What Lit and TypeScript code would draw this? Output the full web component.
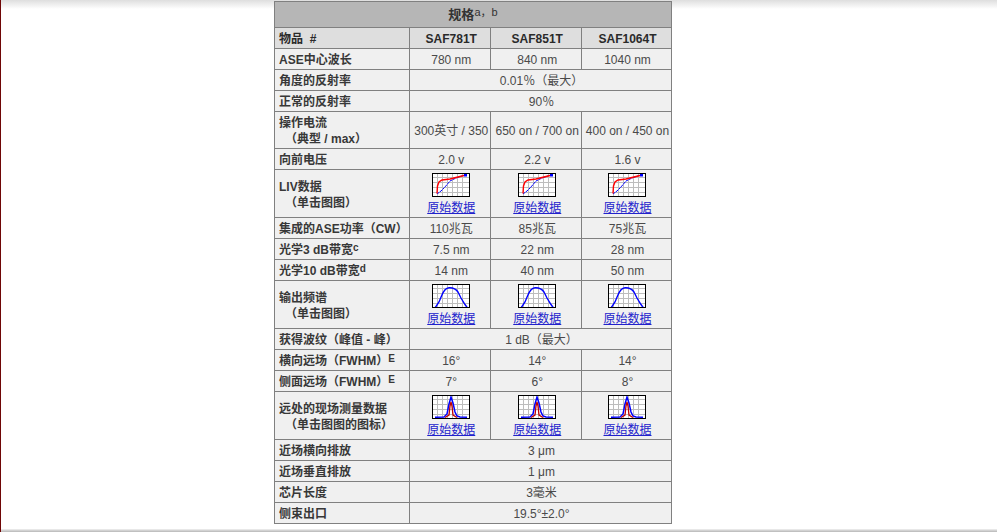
import { LitElement, html, css, svg } from "lit";
import { customElement } from "lit/decorators.js";

const grid = () => {
  const lines = [];
  for (let i = 1; i < 7; i++) lines.push(svg`<line x1=${i * 5 + 0.5} x2=${i * 5 + 0.5} y1="0" y2="24" stroke="#bdbdbd" />`);
  for (let i = 1; i < 5; i++) lines.push(svg`<line x1="0" x2="38" y1=${i * 5 - 0.5} y2=${i * 5 - 0.5} stroke="#bdbdbd" />`);
  return lines;
};

const liv = () => svg`
  <polyline fill="none" stroke="#00f" stroke-width="1" stroke-dasharray="3 .6" points="5,21 9,18 13,14 18,8 24,5 33,2" />
  <polyline fill="none" stroke="#f00" stroke-width="1.4" points="5,20.5 5.5,13 7,9 10,7 18,6 24,4.5 32,2.5" />
  <rect x="32" y="1" width="3" height="2.5" fill="#00f" />`;

const bell = () => svg`
  <path fill="none" stroke="#00f" stroke-width="1.4"
    d="M3 24 L7 18 L9.5 12 C11.5 7 13.5 4 17 3.8 C21 3.6 24 5 26 8 L29 14 L33 20.5 L35.5 24" />`;

const peak = (x: number) => svg`
  <polyline fill="none" stroke="#00f" stroke-width="1.5" points="3,22.3 ${x - 7},22 ${x - 4},19 ${x - 2},9 ${x},2 ${x + 2},8 ${x + 4},17 ${x + 6},21 ${x + 9},22 35,22.3" />
  <polyline fill="none" stroke="#c00000" stroke-width="1.3" points="${x - 6},22.5 ${x - 2},20 ${x - 1},11 ${x},7 ${x + 1},11 ${x + 2},20 ${x + 6},22.5" />`;

const chart = (body: unknown) => html`<svg class="chart" width="38" height="24" viewBox="0 0 38 24">
  <rect width="38" height="24" fill="#fff" />${grid()}${body}
  <rect x=".5" y=".5" width="37" height="23" fill="none" stroke="#000" />
</svg>`;

const media = (body: unknown) => html`<td class="media">${chart(body)}<a class="raw" href="#">原始数据</a></td>`;

const row = (cls: string, label: unknown, vals: string[]) => html`<tr class=${cls}>
  <th class="label">${label}</th>
  ${vals.length === 1
    ? html`<td colspan="3">${vals[0]}</td>`
    : vals.map((v) => html`<td>${v}</td>`)}
</tr>`;

@customElement("app-root")
export class AppRoot extends LitElement {
  static styles = css`
    :host {
      display: block;
      height: 532px;
      box-sizing: border-box;
      background: linear-gradient(#dedede, #fff 9px);
      border-left: 1px solid #6f0606;
      position: relative;
      overflow: hidden;
      font-family: "Liberation Sans", "Noto Sans CJK SC", sans-serif;
      font-size: 12px;
      color: #4a4a4a;
    }
    .page {
      display: flex;
      justify-content: center;
      padding: 1px 52px 0 0;
    }
    .foot {
      position: absolute;
      left: -1px;
      right: 0;
      bottom: 0;
      height: 3px;
      background: linear-gradient(#ececec, #e4e4e4 1px, #c0c0c0 2px);
    }
    table {
      border-collapse: collapse;
      table-layout: fixed;
      width: 398px;
      border: 1px solid #808080;
    }
    th, td {
      border: 1px solid #808080;
      padding: 2px 0 0 2px;
      text-align: center;
      font-weight: 400;
      line-height: 16px;
      background: #f0f0f0;
      white-space: nowrap;
      overflow: hidden;
    }
    col.c0 { width: 135px; }
    col.c1 { width: 81.5px; }
    col.c2 { width: 90.5px; }
    col.c3 { width: 90px; }
    tr { height: 21px; }
    tr.title { height: 26px; }
    tr.two { height: 37px; }
    tr.big { height: 48px; }
    tr.title th {
      background: #b6b6b6;
      font-size: 13px;
      font-weight: 700;
      color: #333;
      padding: 0;
    }
    tr.title sup { font-size: 11px; vertical-align: 3px; }
    tr.head th, tr.head td {
      background: #dedede;
      font-weight: 700;
      color: #2a2a2a;
    }
    th.label {
      text-align: left;
      padding-left: 4px;
      font-weight: 700;
      color: #383838;
      font-size: 12px;
    }
    tr.big th.label { padding-top: 4px; }
    .sub { display: block; padding-left: 6px; line-height: 17px; }
    sup { font-size: 10px; line-height: 0; vertical-align: 3px; font-weight: 400; }
    th.label sup { font-weight: 700; }
    .media { vertical-align: top; padding-top: 3px; }
    .chart { display: block; margin: 0 auto 4px; }
    .raw { color: #2222cc; text-decoration: underline; display: block; line-height: 15px; }
  `;

  render() {
    return html`<div class="page"><table>
      <colgroup><col class="c0" /><col class="c1" /><col class="c2" /><col class="c3" /></colgroup>
      <tr class="title"><th colspan="4">规格<sup>a，b</sup></th></tr>
      <tr class="head"><th class="label">物品&nbsp; #</th><td>SAF781T</td><td>SAF851T</td><td>SAF1064T</td></tr>
      ${row("", "ASE中心波长", ["780 nm", "840 nm", "1040 nm"])}
      ${row("", "角度的反射率", ["0.01％（最大）"])}
      ${row("", "正常的反射率", ["90％"])}
      ${row("two", html`操作电流<span class="sub">（典型 / max）</span>`, ["300英寸 / 350", "650 on / 700 on", "400 on / 450 on"])}
      ${row("", "向前电压", ["2.0 v", "2.2 v", "1.6 v"])}
      <tr class="big"><th class="label">LIV数据<span class="sub">（单击图图）</span></th>
        ${media(liv())}${media(liv())}${media(liv())}</tr>
      ${row("", "集成的ASE功率（CW）", ["110兆瓦", "85兆瓦", "75兆瓦"])}
      ${row("", html`光学3 dB带宽<sup>c</sup>`, ["7.5 nm", "22 nm", "28 nm"])}
      ${row("", html`光学10 dB带宽<sup>d</sup>`, ["14 nm", "40 nm", "50 nm"])}
      <tr class="big"><th class="label">输出频谱<span class="sub">（单击图图）</span></th>
        ${media(bell())}${media(bell())}${media(bell())}</tr>
      ${row("", "获得波纹（峰值 - 峰）", ["1 dB（最大）"])}
      ${row("", html`横向远场（FWHM）<sup>E</sup>`, ["16°", "14°", "14°"])}
      ${row("", html`侧面远场（FWHM）<sup>E</sup>`, ["7°", "6°", "8°"])}
      <tr class="big"><th class="label">远处的现场测量数据<span class="sub">（单击图图的图标）</span></th>
        ${media(peak(19))}${media(peak(19))}${media(peak(19))}</tr>
      ${row("", "近场横向排放", ["3 μm"])}
      ${row("", "近场垂直排放", ["1 μm"])}
      ${row("", "芯片长度", ["3毫米"])}
      ${row("", "侧束出口", ["19.5°±2.0°"])}
    </table></div><div class="foot"></div>`;
  }
}
